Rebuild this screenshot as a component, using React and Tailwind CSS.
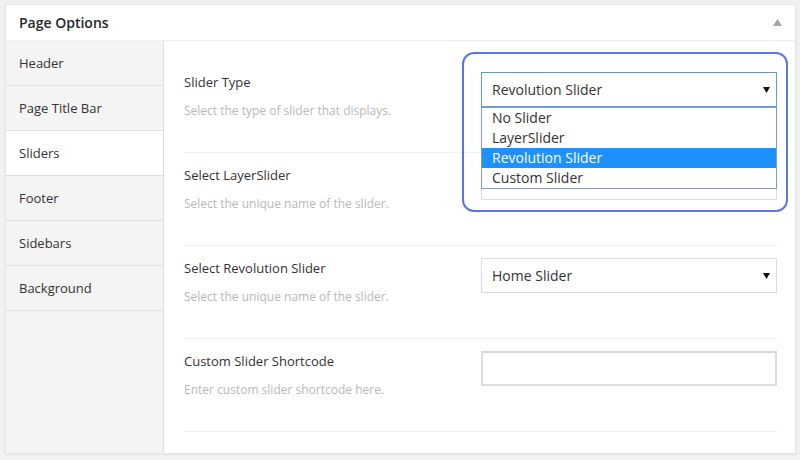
const tabs = ["Header", "Page Title Bar", "Sliders", "Footer", "Sidebars", "Background"];

const options = ["No Slider", "LayerSlider", "Revolution Slider", "Custom Slider"];

function Arrow() {
  return (
    <svg width="7" height="6" viewBox="0 0 7 6" className="shrink-0">
      <polygon points="0,0 7,0 3.5,6" fill="#111" />
    </svg>
  );
}

function Select({ value, focused, open }) {
  return (
    <div className="relative w-[296px] mt-[12px]">
      <div
        className={
          "h-[35px] flex items-center justify-between pl-[10px] pr-[6px] text-[14px] text-[#333] bg-white border " +
          (focused ? "border-[#5b9dd9]" : "border-[#dddddd]")
        }
      >
        <span>{value}</span>
        <Arrow />
      </div>
      {open && (
        <div className="absolute left-0 right-0 top-[35px] bg-white border border-[#7e9ad8] z-10">
          {options.map((o) => (
            <div
              key={o}
              className={
                "h-[20px] leading-[20px] pl-[10px] text-[14px] " +
                (o === value ? "bg-[#1e90ff] text-white" : "text-[#333]")
              }
            >
              {o}
            </div>
          ))}
        </div>
      )}
    </div>
  );
}

function Row({ label, desc, children }) {
  return (
    <div className="flex justify-between border-b border-[#f0f0f0] pb-[32px]">
      <div className="pt-[13px]">
        <div className="text-[13px] leading-[18px] text-[#333]">{label}</div>
        <div className="mt-[11px] text-[12px] leading-[18px] text-[#b8b8b8]">{desc}</div>
      </div>
      {children}
    </div>
  );
}

export default function App() {
  return (
    <div
      className="relative w-[800px] h-[460px] overflow-hidden bg-[#f1f1f1] pt-[4px] pl-[5px]"
      style={{ fontFamily: '"Open Sans", "Noto Sans", sans-serif' }}
    >
      <div className="w-[791px] h-[450px] bg-white border border-[#e5e5e5] shadow-[0_1px_2px_rgba(0,0,0,0.06)] flex flex-col">
        {/* title bar */}
        <div className="h-[36px] shrink-0 flex items-center justify-between pl-[13px] pr-[13px] border-b border-[#eeeeee]">
          <span className="text-[14px] font-semibold text-[#23282d]">Page Options</span>
          <svg width="9" height="7" viewBox="0 0 9 7">
            <polygon points="4.5,0 9,7 0,7" fill="#a0a5aa" />
          </svg>
        </div>

        <div className="flex flex-1">
          {/* tabs */}
          <div className="w-[158px] shrink-0 bg-[#f4f4f4] border-r border-[#dfdfdf]">
            {tabs.map((t) => (
              <div
                key={t}
                className={
                  "h-[45px] flex items-center pl-[13px] pt-[1px] text-[13px] text-[#333] border-b border-[#dfdfdf] " +
                  (t === "Sliders" ? "bg-white" : "")
                }
              >
                {t}
              </div>
            ))}
          </div>

          {/* options */}
          <div className="flex-1 pl-[20px] pr-[18px] pt-[19px]">
            <Row label="Slider Type" desc="Select the type of slider that displays.">
              <Select value="Revolution Slider" focused open />
            </Row>
            <Row label="Select LayerSlider" desc="Select the unique name of the slider.">
              <Select value="" />
            </Row>
            <Row label="Select Revolution Slider" desc="Select the unique name of the slider.">
              <Select value="Home Slider" />
            </Row>
            <Row label="Custom Slider Shortcode" desc="Enter custom slider shortcode here.">
              <div className="w-[296px] h-[35px] mt-[12px] border-2 border-[#dddddd] border-t-[#d5d5d5]" />
            </Row>
          </div>
        </div>
      </div>

      {/* highlight annotation */}
      <div className="absolute left-[462px] top-[52px] w-[326px] h-[160px] border-2 border-[#5b74e8] rounded-[12px] z-20 pointer-events-none" />
    </div>
  );
}
